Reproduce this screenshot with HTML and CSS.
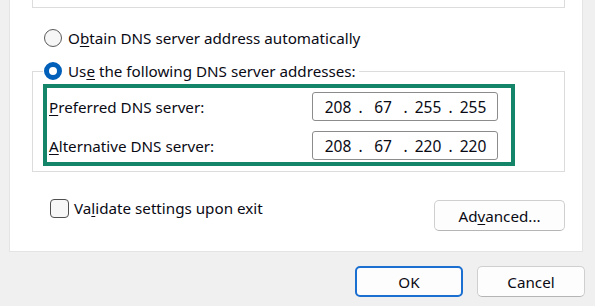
FILE: index.html
```html
<!DOCTYPE html>
<html lang="en">

<head>
    <meta charset="UTF-8">
    <meta name="viewport" content="width=device-width, initial-scale=1.0">
    <title>DNS Settings</title>
    <link rel="stylesheet" href="styles.css">
</head>

<body>
    <div class="panel">
        <div class="prev-group"></div>

        <label class="option first">
            <span class="radio"></span>
            <span>O<u>b</u>tain DNS server address automatically</span>
        </label>

        <fieldset class="group">
            <legend class="option">
                <span class="radio checked"></span>
                <span>Us<u>e</u> the following DNS server addresses:</span>
            </legend>
            <div class="highlight">
                <div class="dns-row">
                    <span><u>P</u>referred DNS server:</span>
                    <div class="ip">
                        <span class="octet">208</span><span class="dot">.</span>
                        <span class="octet">67</span><span class="dot">.</span>
                        <span class="octet">255</span><span class="dot">.</span>
                        <span class="octet">255</span>
                    </div>
                </div>
                <div class="dns-row">
                    <span><u>A</u>lternative DNS server:</span>
                    <div class="ip">
                        <span class="octet">208</span><span class="dot">.</span>
                        <span class="octet">67</span><span class="dot">.</span>
                        <span class="octet">220</span><span class="dot">.</span>
                        <span class="octet">220</span>
                    </div>
                </div>
            </div>
        </fieldset>

        <div class="bottom-row">
            <label class="check">
                <span class="box"></span>
                <span>Va<u>l</u>idate settings upon exit</span>
            </label>
            <button class="btn advanced">Ad<u>v</u>anced...</button>
        </div>
    </div>

    <div class="actions">
        <button class="btn default">OK</button>
        <button class="btn">Cancel</button>
    </div>
</body>

</html>
```

FILE: styles.css
```css
body {
    margin: 0;
    background-color: #f0f0f0;
    font-family: "Noto Sans", "Open Sans", sans-serif;
    font-size: 15.2px;
    color: #0a0a14;
}

u {
    text-decoration-thickness: 1px;
    text-underline-offset: 2px;
}

.panel {
    box-sizing: border-box;
    width: 574px;
    height: 252px;
    margin-left: 9px;
    padding-left: 22px;
    background-color: #fff;
    border: 1px solid #e4e4e4;
    border-top: none;
}

.prev-group {
    box-sizing: border-box;
    width: 533px;
    height: 8px;
    border: 1px solid #dcdcdc;
    border-top: none;
}

.option {
    display: flex;
    align-items: center;
    gap: 6px;
    height: 20px;
    line-height: 20px;
}

.option.first {
    margin-top: 20px;
    padding-left: 12px;
}

.radio {
    box-sizing: border-box;
    width: 18px;
    height: 18px;
    border-radius: 50%;
    border: 1px solid #5a5a5a;
    background-color: #f6f6f6;
}

.radio.checked {
    border: 5.5px solid #005fb8;
    background-color: #fff;
}

.group {
    box-sizing: border-box;
    width: 533px;
    margin: 13px 0 0 0;
    padding: 0 0 5px 10px;
    border: 1px solid #dcdcdc;
}

.group legend {
    padding: 0 3px 0 1px;
}

.highlight {
    box-sizing: border-box;
    width: 472px;
    margin-top: 3px;
    padding: 4px 13px 2px 2px;
    border: 4px solid #148569;
    display: flex;
    flex-direction: column;
    gap: 10px;
}

.dns-row {
    display: flex;
    justify-content: space-between;
    align-items: center;
}

.ip {
    box-sizing: border-box;
    width: 186px;
    height: 29px;
    padding-left: 6px;
    border: 1px solid #8c8c8c;
    border-radius: 3px;
    display: flex;
    align-items: center;
    font-size: 15.5px;
}

.octet {
    width: 38px;
    text-align: center;
}

.dot {
    width: 7px;
    text-align: center;
}

.bottom-row {
    width: 533px;
    margin-top: 26px;
    display: flex;
    justify-content: space-between;
    align-items: flex-start;
}

.check {
    display: flex;
    align-items: center;
    gap: 5px;
    height: 20px;
    margin-left: 18px;
}

.box {
    box-sizing: border-box;
    width: 19px;
    height: 19px;
    border: 1px solid #4f4f4f;
    border-radius: 4px;
    background-color: #f7f7f7;
}

.btn {
    box-sizing: border-box;
    width: 108px;
    height: 31px;
    font-family: inherit;
    font-size: 15.2px;
    color: #0a0a14;
    background-color: #fdfdfd;
    border: 1px solid #cfcfcf;
    border-bottom-color: #b5b5b5;
    border-radius: 5px;
    padding: 0;
}

.advanced {
    width: 131px;
    margin-top: 2px;
}

.actions {
    display: flex;
    justify-content: flex-end;
    gap: 14px;
    padding: 14px 10px 0 0;
}

.btn.default {
    border: 2px solid #1b6fd0;
}
```
